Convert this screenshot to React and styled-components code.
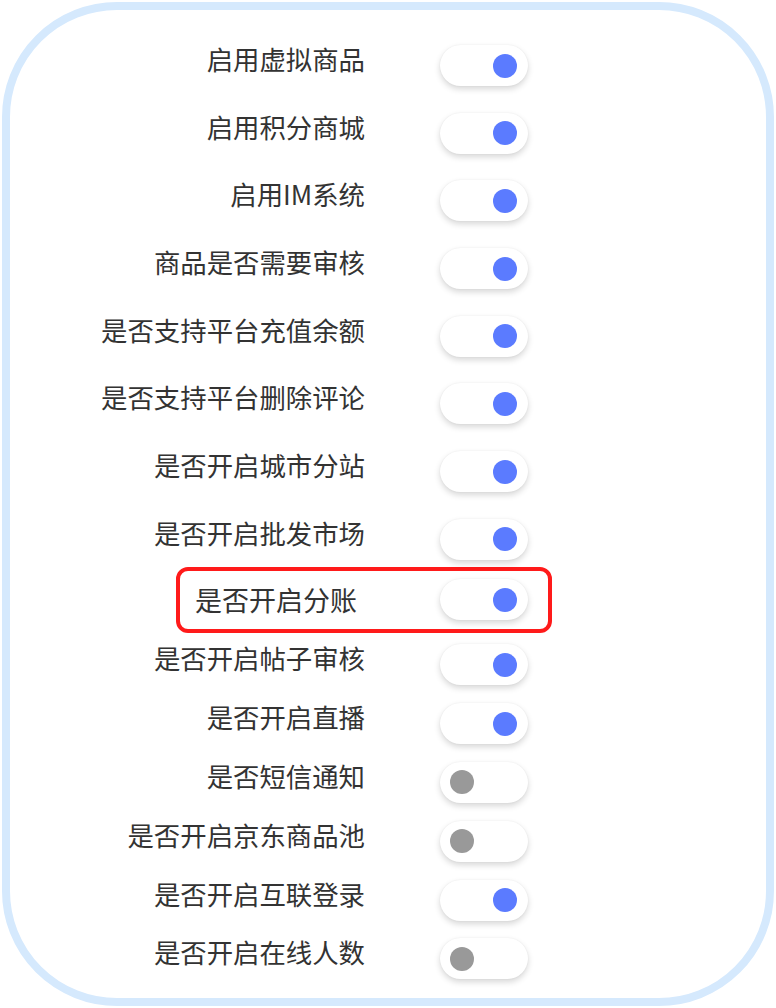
import React from "react";
import styled, { createGlobalStyle } from "styled-components";

const Global = createGlobalStyle`
  html, body { margin: 0; padding: 0; background: #ffffff; }
  body { font-family: "Noto Sans CJK SC", "Noto Sans", sans-serif; }
  * { box-sizing: border-box; }
`;

const Frame = styled.div`
  margin: 2px;
  width: 772px;
  height: 1004px;
  border: 8px solid #d5e9fd;
  border-radius: 115px;
  background: #ffffff;
  padding: 34px 0 0 65px;
`;

const Group = styled.div`
  display: flex;
  flex-direction: column;
  gap: ${(p) => p.$gap}px;
`;

const Row = styled.div`
  display: grid;
  grid-template-columns: 290px 88px;
  column-gap: 75px;
  align-items: center;
  height: 41px;
`;

const Label = styled.div`
  font-size: ${(p) => p.$size || 26.4}px;
  line-height: 30px;
  color: #333333;
  white-space: nowrap;
  text-align: ${(p) => (p.$left ? "left" : "right")};
  margin-bottom: ${(p) => (p.$left ? 0 : 13)}px;
`;

const Highlight = styled.div`
  margin: 8px 0 10.5px 101px;
  width: 376px;
  height: 66px;
  border: 4px solid #ff1a1a;
  border-radius: 12px;
  padding: 8.5px 20px 8.5px 15px;
  display: grid;
  grid-template-columns: 1fr 88px;
  align-items: center;
`;

const Track = styled.div`
  width: 88px;
  height: 41px;
  border-radius: 21px;
  background: #ffffff;
  box-shadow: 0 3px 6px rgba(0, 0, 0, 0.16), 0 0 2px rgba(0, 0, 0, 0.06);
  display: flex;
  align-items: center;
  justify-content: ${(p) => (p.$on ? "flex-end" : "flex-start")};
  padding: 0 11px 0 10px;
`;

const Knob = styled.div`
  width: 24px;
  height: 24px;
  border-radius: 50%;
  background: ${(p) => (p.$on ? "#5b7bff" : "#999999")};
`;

const Toggle = ({ on }) => (
  <Track $on={on}>
    <Knob $on={on} />
  </Track>
);

const groupA = [
  ["启用虚拟商品", true],
  ["启用积分商城", true],
  ["启用IM系统", true],
  ["商品是否需要审核", true],
  ["是否支持平台充值余额", true],
  ["是否支持平台删除评论", true],
  ["是否开启城市分站", true],
  ["是否开启批发市场", true],
];

const groupB = [
  ["是否开启帖子审核", true],
  ["是否开启直播", true],
  ["是否短信通知", false],
  ["是否开启京东商品池", false],
  ["是否开启互联登录", true],
  ["是否开启在线人数", false],
];

export default function App() {
  return (
    <>
      <Global />
      <Frame>
        <Group $gap={26.7}>
          {groupA.map(([t, on]) => (
            <Row key={t}>
              <Label>{t}</Label>
              <Toggle on={on} />
            </Row>
          ))}
        </Group>
        <Highlight>
          <Label $left $size={27}>是否开启分账</Label>
          <Toggle on={true} />
        </Highlight>
        <Group $gap={17.8}>
          {groupB.map(([t, on]) => (
            <Row key={t}>
              <Label>{t}</Label>
              <Toggle on={on} />
            </Row>
          ))}
        </Group>
      </Frame>
    </>
  );
}
